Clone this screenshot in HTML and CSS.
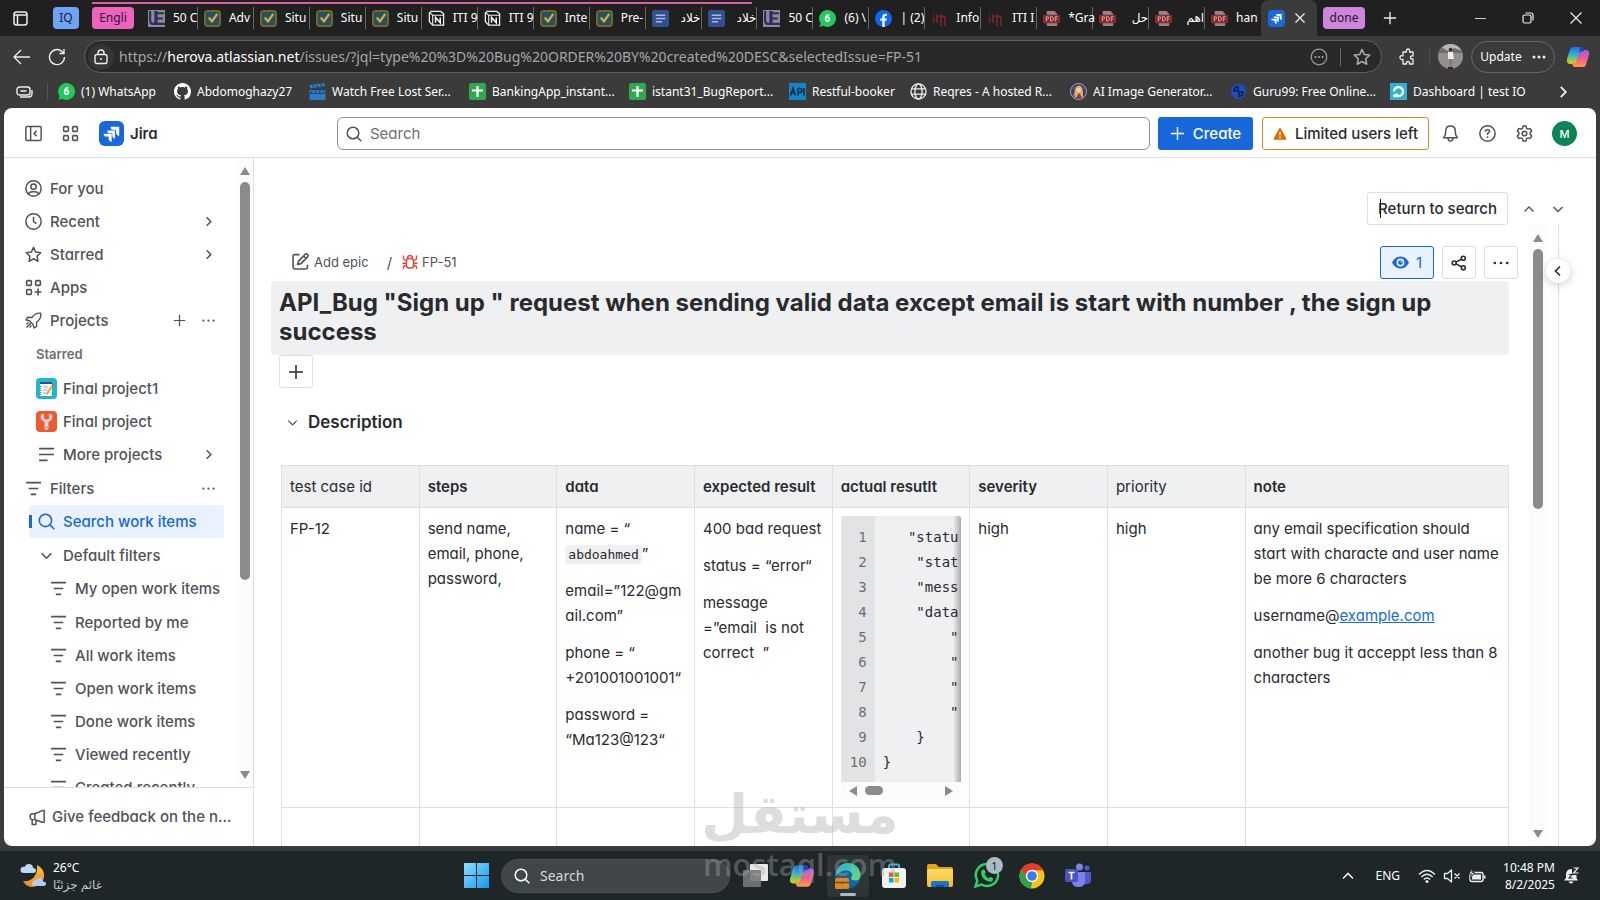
FILE: index.html
```html
<!DOCTYPE html>
<html lang="en">
<head>
<meta charset="utf-8">
<title>FP-51 - Jira</title>
<link rel="stylesheet" href="styles.css">
</head>
<body>
<svg class="defs" aria-hidden="true">
  <defs>
    <linearGradient id="gWin" x1="0" y1="0" x2="1" y2="1"><stop offset="0" stop-color="#8be0fb"/><stop offset="1" stop-color="#1596ee"/></linearGradient>
    <linearGradient id="gCoA" x1="0" y1="0" x2="0" y2="1"><stop offset="0" stop-color="#1a6ee8"/><stop offset=".45" stop-color="#2bb3d6"/><stop offset=".75" stop-color="#8ecb4a"/><stop offset="1" stop-color="#f5c518"/></linearGradient>
    <linearGradient id="gCoB" x1="0" y1="0" x2="0" y2="1"><stop offset="0" stop-color="#a35bea"/><stop offset=".5" stop-color="#ef5b93"/><stop offset="1" stop-color="#ff9a4a"/></linearGradient>
    <linearGradient id="gEdge" x1="0" y1="0" x2="1" y2="1"><stop offset="0" stop-color="#2aa8e0"/><stop offset=".6" stop-color="#3fd1a0"/><stop offset="1" stop-color="#6be06a"/></linearGradient>
    <linearGradient id="gMoon" x1="0" y1="0" x2="0" y2="1"><stop offset="0" stop-color="#f6c443"/><stop offset="1" stop-color="#ee8b25"/></linearGradient>
    <linearGradient id="gFold" x1="0" y1="0" x2="0" y2="1"><stop offset="0" stop-color="#ffdc6a"/><stop offset="1" stop-color="#f7b92b"/></linearGradient>
  </defs>
  <symbol id="ue" viewBox="0 0 16 16"><rect width="16" height="16" fill="#8b8b90"/><path d="M2 1v9q0 3 3 3h2V1M8 3h7M8 8h6M8 13h8M8 1v13" fill="none" stroke="#2c2a68" stroke-width="2"/></symbol>
  <symbol id="check" viewBox="0 0 18 18"><rect x="1" y="1" width="16" height="16" rx="3" fill="#24506e" stroke="#77681f" stroke-width="2"/><path d="M5 8l3.500 4L14 4" fill="none" stroke="#d3ad2f" stroke-width="2.400"/></symbol>
  <symbol id="notion" viewBox="0 0 18 18"><path d="M1.500 3l2-1.500h10l3 2.500v12H5L1.500 12.500z" fill="#161616" stroke="#eee" stroke-width="1.400"/><path d="M2 3l3 2.500h11.500M5 5.500V16" fill="none" stroke="#eee" stroke-width="1.200"/><path d="M8 13.500V8l5 5.500V8" fill="none" stroke="#fff" stroke-width="1.600"/></symbol>
  <symbol id="doc" viewBox="0 0 16 16"><rect width="16" height="16" rx="2" fill="#31508f"/><path d="M3.500 5h9M3.500 8h9M3.500 11h6" stroke="#a9b6d4" stroke-width="1.500"/></symbol>
  <symbol id="wa6" viewBox="0 0 18 18"><path d="M9 0a9 9 0 1 1-4.500 16.800L.500 18l1.200-4A9 9 0 0 1 9 0z" fill="#25c95b"/><path d="M11 5Q7 5 7 9.500a2 2.200 0 1 0 2-2q-1.500 0-2 2" fill="none" stroke="#fff" stroke-width="1.700"/></symbol>
  <symbol id="fb" viewBox="0 0 18 18"><circle cx="9" cy="9" r="9" fill="#1166ee"/><path d="M7.800 18v-6.500H5.600V9h2.200V7.200Q7.800 4 11 4h1.500v2.300h-1.200q-1.100 0-1.100 1.200V9h2.200l-.4 2.500h-1.800V18z" fill="#fff"/></symbol>
  <symbol id="iti" viewBox="0 0 14 16"><path d="M1.500 6v6M1.500 3v1.500M4.500 4v8M4.500 6h3M8.500 4v11M8.500 6h3.500v9" fill="none" stroke="#70262b" stroke-width="1.600"/></symbol>
  <symbol id="pdf" viewBox="0 0 18 18"><path d="M4 1h8l3 3v13H4z" fill="#8f8787"/><rect x="0" y="5" width="18" height="9" rx="1.500" fill="#8a2a2d"/><path d="M3.500 12V7h1.200q1.300 0 1.300 1.300T4.700 9.600H3.500M8 7h1q2 0 2 2.300T9 11.700H8zM13 12V7h2.500M13 9.400h2" fill="none" stroke="#d8b4b4" stroke-width=".9"/></symbol>
  <symbol id="jira" viewBox="0 0 26 26"><rect width="26" height="26" rx="6" fill="#1868db"/><path d="M12 6h9v9.500q-3.200-.600-3.200-3.500V9.300H15.500Q12 9.300 12 6z" fill="#fff"/><path d="M8.500 9.800h8.200v8.400q-3-.5-3-3.400v-2h-2q-3.200 0-3.200-3z" fill="#fff" opacity=".95"/><path d="M4.800 13.200h8.400v8.300q-3.200-.5-3.200-3.400v-1.900H8q-3.200 0-3.200-3z" fill="#fff"/></symbol>
  <symbol id="github" viewBox="0 0 16 16"><path fill="#fff" d="M8 0C3.580 0 0 3.580 0 8c0 3.540 2.290 6.530 5.470 7.590.4.070.55-.17.55-.38 0-.19-.01-.82-.01-1.490-2.010.37-2.530-.49-2.690-.94-.09-.23-.48-.94-.82-1.130-.28-.15-.68-.52-.01-.53.63-.01 1.080.58 1.230.82.72 1.210 1.870.87 2.330.66.07-.52.28-.87.51-1.070-1.780-.2-3.640-.89-3.640-3.950 0-.87.31-1.590.82-2.150-.08-.2-.36-1.020.08-2.120 0 0 .67-.21 2.200.82.640-.18 1.320-.27 2-.27s1.360.09 2 .27c1.530-1.040 2.200-.82 2.200-.82.44 1.100.16 1.920.08 2.120.51.56.82 1.270.82 2.150 0 3.070-1.870 3.750-3.650 3.950.29.25.54.73.54 1.480 0 1.070-.01 1.930-.01 2.200 0 .21.15.46.55.38A8.010 8.010 0 0 0 16 8c0-4.420-3.580-8-8-8z"/></symbol>
  <symbol id="film" viewBox="0 0 16 17"><path d="M0 7h16v10H0zM0 2l15-2 .5 3L.500 5.500z" fill="#2e7cc4"/><path d="M3 2l1.500 2.500M7 1.500L8.500 4M11 1l1.500 2.500M3 7L1.500 10M7 7L5.500 10M11 7L9.500 10M15 7l-1.500 3M0 10.500h16" stroke="#1d4a78" stroke-width="1.200"/></symbol>
  <symbol id="plusg" viewBox="0 0 17 17"><rect width="17" height="17" rx="2" fill="#2fa84f"/><path d="M8.500 3v11M3 7.500h11" stroke="#fff" stroke-width="2.200"/></symbol>
  <symbol id="api" viewBox="0 0 17 17"><rect width="17" height="17" fill="#1585c7"/><path d="M1.500 12.500L4 5l2.500 7.500M2.500 10h3M9 12.500V5.500h2q2 0 2 2t-2 2H9M15 5v7.500" fill="none" stroke="#0b2740" stroke-width="1.500"/></symbol>
  <symbol id="globe" viewBox="0 0 18 18"><g fill="none" stroke="#eee" stroke-width="1.400"><circle cx="9" cy="9" r="8"/><ellipse cx="9" cy="9" rx="3.800" ry="8"/><path d="M1.500 6.200h15M1.500 11.800h15"/></g></symbol>
  <symbol id="ai" viewBox="0 0 17 17"><circle cx="8.500" cy="8.500" r="8" fill="#35406e" stroke="#a8a8b8"/><path d="M4.500 14.500Q3.500 3.500 8.500 2.500T13 14.500z" fill="#e0b060"/><circle cx="8.800" cy="7" r="2.300" fill="#f2cfb4"/><path d="M6.500 16Q7 10.500 9 10.500t2.500 5.500z" fill="#8a3d5a"/><path d="M3 6l2-2M13 4l1.500 2M3 11l1 2" stroke="#d05060"/></symbol>
  <symbol id="guru" viewBox="0 0 17 17"><circle cx="8.500" cy="8.500" r="7.500" fill="#1c4fc4"/><path d="M8 3.500Q4 4 4 8h4zM9 13.500q4-.5 4-4.500H9z" fill="none" stroke="#10213f" stroke-width="1.600"/></symbol>
  <symbol id="tio" viewBox="0 0 17 17"><rect width="17" height="17" fill="#2fb0d8"/><path d="M3 13h5.500a4.500 4.500 0 1 0-4.500-4.500M3 13q3-.3 4-2.500" fill="none" stroke="#fff" stroke-width="2.300"/></symbol>
  <symbol id="copilot" viewBox="0 0 24 24"><path d="M7 2h8q2 0 2.500 2L18 6h-2.500q-1.500 0-2 1.600L10.600 17q-.6 2-2.600 2H4.500Q0 19 1 14L4 4.500Q4.600 2 7 2z" fill="url(#gCoA)"/><path d="M17 22H9q-2 0-2.500-2L6 18h2.500q1.500 0 2-1.600L13.400 7q.6-2 2.600-2h3.500q4.500 0 3.500 5l-3 9.500Q19.400 22 17 22z" fill="url(#gCoB)"/><path d="M15 2q2 0 2.500 2l.7 2.300H16q-2 0-2.800 2.700L14 2z" fill="#1848b8"/></symbol>

  <symbol id="i-chev-r" viewBox="0 0 16 16"><path d="M6 3.500L10.500 8 6 12.500" fill="none" stroke="currentColor" stroke-width="1.600"/></symbol>
  <symbol id="i-chev-l" viewBox="0 0 16 16"><path d="M10 3.500L5.500 8l4.500 4.500" fill="none" stroke="currentColor" stroke-width="1.600"/></symbol>
  <symbol id="i-chev-d" viewBox="0 0 16 16"><path d="M3.500 6L8 10.500 12.500 6" fill="none" stroke="currentColor" stroke-width="1.400"/></symbol>
  <symbol id="i-chev-u" viewBox="0 0 16 16"><path d="M3.500 10.500L8 6l4.500 4.500" fill="none" stroke="currentColor" stroke-width="1.400"/></symbol>
  <symbol id="i-plus" viewBox="0 0 16 16"><path d="M8 1v14M1 8h14" fill="none" stroke="currentColor" stroke-width="1.500"/></symbol>
  <symbol id="i-dots" viewBox="0 0 16 16"><g fill="currentColor"><circle cx="2.500" cy="8" r="1.200"/><circle cx="8" cy="8" r="1.200"/><circle cx="13.500" cy="8" r="1.200"/></g></symbol>
  <symbol id="i-search" viewBox="0 0 16 16"><g fill="none" stroke="currentColor" stroke-width="1.500"><circle cx="7" cy="7" r="5.800"/><path d="M11 11l4.300 4.300"/></g></symbol>
  <symbol id="i-filter" viewBox="0 0 16 16"><path d="M1 2.500h14M3.500 8h9M5.500 13.500h5" fill="none" stroke="currentColor" stroke-width="1.500"/></symbol>
  <symbol id="i-lines" viewBox="0 0 16 16"><path d="M1 2.500h14M1 8h14M1 13.500h8" fill="none" stroke="currentColor" stroke-width="1.500"/></symbol>
  <symbol id="i-panel" viewBox="0 0 16 16"><g fill="none" stroke="currentColor" stroke-width="1.400"><rect x=".8" y="1.500" width="14.400" height="13" rx="1"/><path d="M5.300 1.500v13M11 5.500L8.500 8l2.500 2.500"/></g></symbol>
  <symbol id="i-grid" viewBox="0 0 16 16"><g fill="none" stroke="currentColor" stroke-width="1.500"><rect x="1.500" y="1.500" width="4.500" height="4.500" rx="1"/><rect x="10" y="1.500" width="4.500" height="4.500" rx="1"/><rect x="1.500" y="10" width="4.500" height="4.500" rx="1"/><rect x="10" y="10" width="4.500" height="4.500" rx="1"/></g></symbol>
  <symbol id="i-apps" viewBox="0 0 16 16"><g fill="none" stroke="currentColor" stroke-width="1.500"><rect x="1.500" y="1.500" width="4.500" height="4.500" rx="1"/><rect x="10" y="1.500" width="4.500" height="4.500" rx="1"/><rect x="1.500" y="10" width="4.500" height="4.500" rx="1"/><path d="M12.300 9v6.500M9 12.300h6.500"/></g></symbol>
  <symbol id="i-user" viewBox="0 0 16 16"><g fill="none" stroke="currentColor" stroke-width="1.400"><circle cx="8" cy="8" r="7.200"/><circle cx="8" cy="6.300" r="2.500"/><path d="M3.500 13.300Q4 11 6.500 11h3q2.500 0 3 2.300"/></g></symbol>
  <symbol id="i-clock" viewBox="0 0 16 16"><g fill="none" stroke="currentColor" stroke-width="1.400"><circle cx="8" cy="8" r="7.200"/><path d="M8 3.500V8l2.800 2"/></g></symbol>
  <symbol id="i-star" viewBox="0 0 16 16"><path d="M8 1.300l2 4.400 4.800.6-3.500 3.300.9 4.800L8 12l-4.200 2.400.9-4.800L1.200 6.300 6 5.700z" fill="none" stroke="currentColor" stroke-width="1.400" stroke-linejoin="round"/></symbol>
  <symbol id="i-rocket" viewBox="0 0 16 16"><path d="M14.800 1.200Q9.500.5 6.500 5.200L2.500 5 1 7.500l3.500 1 3 3 1 3.500L11 13.500l-.2-4Q15.500 6.500 14.800 1.200zM5.500 10.500L1.500 14.500M3.500 10L1.300 11.500M6 12.500l-1.500 2.200" fill="none" stroke="currentColor" stroke-width="1.300" stroke-linejoin="round"/></symbol>
  <symbol id="i-mega" viewBox="0 0 16 16"><path d="M5.500 4.500L12.500 1.500h1.800v11h-1.800L5.500 10H3.500Q1 10 1 7.300T3.500 4.500zM5.500 4.500V10M3 10v4.500h3.500V11" fill="none" stroke="currentColor" stroke-width="1.400" stroke-linejoin="round"/></symbol>
  <symbol id="i-bell" viewBox="0 0 16 16"><path d="M8 1Q3.800 1 3.500 5.500L3.200 9 1.500 12h13L12.800 9l-.3-3.500Q12.200 1 8 1zM5.500 12.300q.5 2.700 2.500 2.700t2.500-2.700" fill="none" stroke="currentColor" stroke-width="1.400" stroke-linejoin="round"/></symbol>
  <symbol id="i-help" viewBox="0 0 16 16"><g fill="none" stroke="currentColor" stroke-width="1.400"><circle cx="8" cy="8" r="7.200"/><path d="M6 6.300Q6 4.500 8 4.500t2 1.700Q10 7.300 8 8v1.500"/></g><circle cx="8" cy="11.500" r=".9" fill="currentColor"/></symbol>
  <symbol id="i-gear" viewBox="0 0 16 16"><g fill="none" stroke="currentColor" stroke-width="1.400" stroke-linejoin="round"><path d="M6.600 1h2.800l.5 2.100 1.400.8 2.100-.6 1.400 2.400L13.300 7.200v1.600l1.500 1.500-1.400 2.400-2.100-.6-1.400.8L9.400 15H6.600l-.5-2.100-1.400-.8-2.100.6-1.400-2.400 1.500-1.500V7.200L1.200 5.700l1.400-2.400 2.100.6 1.400-.8z"/><circle cx="8" cy="8" r="2.200"/></g></symbol>
  <symbol id="i-warn" viewBox="0 0 16 16"><path d="M8 1.200q.8 0 1.200.8l6 11q.6 1.500-1 1.500H1.800q-1.600 0-1-1.500l6-11Q7.200 1.200 8 1.200z" fill="#e06c00"/><path d="M8 5.500v4" stroke="#fff" stroke-width="1.600"/><circle cx="8" cy="11.800" r="1" fill="#fff"/></symbol>
  <symbol id="i-edit" viewBox="0 0 16 16"><g fill="none" stroke="currentColor" stroke-width="1.500" stroke-linejoin="round"><path d="M7 1.500H2.500Q1 1.500 1 3v10.500Q1 15 2.500 15H13q1.500 0 1.500-1.500V11"/><path d="M12.500 1.200q1.400-.7 2.200.1t0 2.300L8.500 10l-3.200.8.9-3.200zM11 3l2.200 2.200"/></g></symbol>
  <symbol id="i-bug" viewBox="0 0 16 16"><g fill="none" stroke="#e2483d" stroke-width="1.400"><rect x="4.500" y="4.500" width="7" height="9.500" rx="2.500"/><path d="M5.500 4.500Q5.500 1.500 8 1.500t2.500 3M4.500 7L1.500 5V1.500M11.500 7l3-2V1.500M.500 9.200h4M11.500 9.200h4M4.500 11l-3 1.500V15M11.500 11l3 1.500V15"/></g></symbol>
  <symbol id="i-eye" viewBox="0 0 17 13"><path d="M8.500.5Q14 .5 17 6.500 14 12.500 8.500 12.500T0 6.500Q3 .5 8.500.5z" fill="#1868db"/><circle cx="8.500" cy="6.500" r="3.900" fill="#e9f2fe"/><circle cx="8.500" cy="6.500" r="2.300" fill="#1868db"/><circle cx="9.300" cy="5.700" r=".8" fill="#e9f2fe"/></symbol>
  <symbol id="i-share" viewBox="0 0 16 16"><g fill="none" stroke="currentColor" stroke-width="1.600"><circle cx="3.200" cy="8" r="2"/><circle cx="12.300" cy="3.300" r="2"/><circle cx="12.300" cy="12.700" r="2"/><path d="M5 7.100l5.500-2.900M5 8.900l5.500 2.900"/></g></symbol>
</svg>

<header class="chrome">
  <div class="tabstrip">
    <button class="tabmenu" aria-label="Tab actions"><svg width="15" height="15" viewBox="0 0 15 15"><g fill="none" stroke="#eee" stroke-width="1.500"><rect x="1" y="1" width="13" height="13" rx="2.500"/><path d="M1 4h13M4.500 4v10"/></g></svg></button>
    <button class="group blue">IQ</button>
    <button class="group pink">Engli</button>
    <div class="tabs">
      <span class="groupline"></span>
      <button class="tab"><svg class="fav"><use href="#ue"/></svg><span>50 C</span></button>
      <button class="tab"><svg class="fav"><use href="#check"/></svg><span>Adv</span></button>
      <button class="tab"><svg class="fav"><use href="#check"/></svg><span>Situ</span></button>
      <button class="tab"><svg class="fav"><use href="#check"/></svg><span>Situ</span></button>
      <button class="tab"><svg class="fav"><use href="#check"/></svg><span>Situ</span></button>
      <button class="tab"><svg class="fav"><use href="#notion"/></svg><span>ITI 9</span></button>
      <button class="tab"><svg class="fav"><use href="#notion"/></svg><span>ITI 9</span></button>
      <button class="tab"><svg class="fav"><use href="#check"/></svg><span>Inte</span></button>
      <button class="tab"><svg class="fav"><use href="#check"/></svg><span>Pre-</span></button>
      <button class="tab"><svg class="fav"><use href="#doc"/></svg><span dir="rtl">خلاد</span></button>
      <button class="tab"><svg class="fav"><use href="#doc"/></svg><span dir="rtl">خلاد</span></button>
      <button class="tab"><svg class="fav"><use href="#ue"/></svg><span>50 C</span></button>
      <button class="tab"><svg class="fav"><use href="#wa6"/></svg><span>(6) \</span></button>
      <button class="tab"><svg class="fav"><use href="#fb"/></svg><span dir="rtl">(2) |</span></button>
      <button class="tab"><svg class="fav"><use href="#iti"/></svg><span>Info</span></button>
      <button class="tab"><svg class="fav"><use href="#iti"/></svg><span>ITI I</span></button>
      <button class="tab"><svg class="fav"><use href="#pdf"/></svg><span>*Gra</span></button>
      <button class="tab"><svg class="fav"><use href="#pdf"/></svg><span dir="rtl">حل</span></button>
      <button class="tab"><svg class="fav"><use href="#pdf"/></svg><span dir="rtl">اهم</span></button>
      <button class="tab last"><svg class="fav"><use href="#pdf"/></svg><span>han</span></button>
    </div>
    <div class="tab-active"><svg class="fav"><use href="#jira"/></svg><button aria-label="Close tab"><svg width="10" height="10" viewBox="0 0 10 10"><path d="M.500.500l9 9M9.500.500l-9 9" stroke="#eee" stroke-width="1.300"/></svg></button></div>
    <button class="group violet">done</button>
    <button class="newtab" aria-label="New tab"><svg width="14" height="14" class="white"><use href="#i-plus"/></svg></button>
    <div class="wincontrols">
      <button aria-label="Minimize"><svg width="11" height="11"><path d="M0 5.500h11" stroke="#ccc" stroke-width="1"/></svg></button>
      <button aria-label="Restore"><svg width="12" height="12" viewBox="0 0 12 12"><g fill="none" stroke="#eee" stroke-width="1.200"><rect x="1" y="3" width="8" height="8" rx="1.500"/><path d="M3.500 1h5.500q2 0 2 2v5.500"/></g></svg></button>
      <button aria-label="Close"><svg width="12" height="12" viewBox="0 0 12 12"><path d="M.500.500l11 11M11.500.500l-11 11" stroke="#eee" stroke-width="1.200"/></svg></button>
    </div>
  </div>

  <div class="toolbar">
    <button class="nav" aria-label="Back"><svg width="17" height="16" viewBox="0 0 17 16"><path d="M8 1L1 8l7 7M1 8h16" fill="none" stroke="#eee" stroke-width="1.300"/></svg></button>
    <button class="nav" aria-label="Refresh"><svg width="18" height="18" viewBox="0 0 18 18"><path d="M16.500 9A7.500 7.500 0 1 1 14 3.500L16 5.500M16 1v4.500h-4.500" fill="none" stroke="#eee" stroke-width="1.400"/></svg></button>
    <div class="address">
      <span class="lock"><svg width="14" height="16" viewBox="0 0 14 16"><g fill="none" stroke="#eee" stroke-width="1.400"><rect x="1" y="5.500" width="12" height="9" rx="2"/><path d="M4 5.500V4q0-3 3-3t3 3v1.500"/></g><circle cx="7" cy="10" r="1" fill="#eee"/></svg></span>
      <a class="url" href="#">https://<b>herova.atlassian.net</b>/issues/?jql=type%20%3D%20Bug%20ORDER%20BY%20created%20DESC&amp;selectedIssue=FP-51</a>
      <svg width="18" height="18" viewBox="0 0 18 18"><circle cx="9" cy="9" r="7.800" fill="none" stroke="#999" stroke-width="1.200"/><g fill="#aaa"><circle cx="5.500" cy="9" r="1"/><circle cx="9" cy="9" r="1"/><circle cx="12.500" cy="9" r="1"/></g></svg>
      <i class="vsep"></i>
      <svg width="18" height="18" class="grey"><use href="#i-star"/></svg>
    </div>
    <svg class="puzzle" width="18" height="18" viewBox="0 0 18 18"><path d="M5 4h2.500Q7 1 9 1t1.500 3H14v4q-2.500-.5-2.500 1.500T14 11v5h-3.500Q11 13.500 9 13.500T7.500 16H4v-4.500Q1 12 1 9.500T4 8V4z" fill="none" stroke="#eee" stroke-width="1.300" stroke-linejoin="round"/></svg>
    <i class="tsep"></i>
    <svg class="profile" width="25" height="25" viewBox="0 0 25 25"><clipPath id="cp"><circle cx="12.500" cy="12.500" r="12.500"/></clipPath><g clip-path="url(#cp)"><rect width="25" height="25" fill="#8f8f94"/><rect width="25" height="7" fill="#b9b7b0"/><path d="M0 6l5-2 5 3 6-3 9 3v2H0z" fill="#6f6f66"/><circle cx="12.500" cy="5.500" r="1.800" fill="#3f2e28"/><path d="M10 8h5l1 7h-6z" fill="#ecebec"/><path d="M11 15h3v6l-1 3h-1.500z" fill="#a9705a"/><path d="M10 23h5v2h-5z" fill="#2d2424"/></g></svg>
    <button class="update">Update <svg width="14" height="14" viewBox="0 0 14 14"><g fill="#eee"><circle cx="2" cy="7" r="1.500"/><circle cx="7" cy="7" r="1.500"/><circle cx="12" cy="7" r="1.500"/></g></svg></button>
    <svg class="cop" width="24" height="24"><use href="#copilot"/></svg>
  </div>

  <nav class="bookmarks">
    <svg width="17" height="12" viewBox="0 0 17 12"><g fill="none" stroke="#eee" stroke-width="1.400"><rect x="1" y="1" width="13" height="8" rx="2.500"/><path d="M4.500 5h6M4 11h8.500q3.500 0 3.500-3.500V4"/></g></svg>
    <i class="bsep"></i>
    <a href="#" class="w-a"><svg><use href="#wa6"/></svg><span>(1) WhatsApp</span></a>
    <a href="#" class="w-b"><svg><use href="#github"/></svg><span>Abdomoghazy27</span></a>
    <a href="#"><svg><use href="#film"/></svg><span>Watch Free Lost Ser...</span></a>
    <a href="#"><svg><use href="#plusg"/></svg><span>BankingApp_instant...</span></a>
    <a href="#"><svg><use href="#plusg"/></svg><span>istant31_BugReport...</span></a>
    <a href="#" class="w-c"><svg><use href="#api"/></svg><span>Restful-booker</span></a>
    <a href="#"><svg><use href="#globe"/></svg><span>Reqres - A hosted R...</span></a>
    <a href="#"><svg><use href="#ai"/></svg><span>AI Image Generator...</span></a>
    <a href="#"><svg><use href="#guru"/></svg><span>Guru99: Free Online...</span></a>
    <a href="#"><svg><use href="#tio"/></svg><span>Dashboard | test IO</span></a>
    <button class="more" aria-label="More favorites"><svg width="18" height="18" class="white"><use href="#i-chev-r"/></svg></button>
  </nav>
</header>

<div class="page">
  <header class="jhead">
    <div class="brand">
      <button class="ib" aria-label="Collapse sidebar"><svg width="17" height="17"><use href="#i-panel"/></svg></button>
      <button class="ib" aria-label="Switch sites"><svg width="17" height="17"><use href="#i-grid"/></svg></button>
      <a href="#" class="logo"><svg width="25" height="25"><use href="#jira"/></svg>Jira</a>
    </div>
    <label class="search"><svg width="16" height="16"><use href="#i-search"/></svg><input type="text" placeholder="Search" aria-label="Search"></label>
    <button class="create"><svg width="15" height="15"><use href="#i-plus"/></svg>Create</button>
    <button class="limited"><svg width="14" height="14"><use href="#i-warn"/></svg>Limited users left</button>
    <div class="headicons">
      <button class="ib" aria-label="Notifications"><svg width="17" height="17"><use href="#i-bell"/></svg></button>
      <button class="ib" aria-label="Help"><svg width="17" height="17"><use href="#i-help"/></svg></button>
      <button class="ib" aria-label="Settings"><svg width="17" height="17"><use href="#i-gear"/></svg></button>
    </div>
    <button class="me" aria-label="Account">M</button>
  </header>

  <div class="body">
    <aside class="side">
      <div class="side-scroll">
        <nav class="side-nav">
          <a href="#" class="row"><svg><use href="#i-user"/></svg><span>For you</span></a>
          <a href="#" class="row"><svg><use href="#i-clock"/></svg><span>Recent</span><svg class="end"><use href="#i-chev-r"/></svg></a>
          <a href="#" class="row"><svg><use href="#i-star"/></svg><span>Starred</span><svg class="end"><use href="#i-chev-r"/></svg></a>
          <a href="#" class="row"><svg><use href="#i-apps"/></svg><span>Apps</span></a>
          <a href="#" class="row"><svg><use href="#i-rocket"/></svg><span>Projects</span><svg class="mid"><use href="#i-plus"/></svg><svg class="end"><use href="#i-dots"/></svg></a>
          <h2 class="sub">Starred</h2>
          <a href="#" class="row l2 step"><svg class="proj" viewBox="0 0 21 21"><rect width="21" height="21" rx="4" fill="#1fb6d6"/><rect x="4" y="4" width="12" height="14" fill="#f4f8fa"/><path d="M4 4h12v2H4z" fill="#35506a"/><path d="M4.500 8v10" stroke="#48a" stroke-width="1.500" stroke-dasharray="1 1"/><path d="M7 9h5M7 12h4M7 15h3" stroke="#aab"/><path d="M16.500 6l1.500 1-6 9-2 1 .5-2.500z" fill="#f2a52b"/><path d="M16.500 6l1.500 1-1 1.500-1.500-1z" fill="#d8433b"/></svg><span>Final project1</span></a>
          <a href="#" class="row l2"><svg class="proj" viewBox="0 0 21 21"><rect width="21" height="21" rx="4" fill="#f15a31"/><path d="M5 3.500Q3.500 9 8.500 11v6q0 2 2 2t2-2v-6Q17.500 9 16 3.500L13 3v4.500l-2.500 1.200L8 7.500V3z" fill="#cfd3d8"/><circle cx="10.500" cy="16.500" r="1" fill="#8a9098"/></svg><span>Final project</span></a>
          <a href="#" class="row l2"><svg><use href="#i-lines"/></svg><span>More projects</span><svg class="end"><use href="#i-chev-r"/></svg></a>
          <a href="#" class="row step"><svg><use href="#i-filter"/></svg><span>Filters</span><svg class="end"><use href="#i-dots"/></svg></a>
          <a href="#" class="row l2 on"><svg><use href="#i-search"/></svg><span>Search work items</span></a>
          <a href="#" class="row l2 step"><svg><use href="#i-chev-d"/></svg><span>Default filters</span></a>
          <a href="#" class="row l3"><svg><use href="#i-filter"/></svg><span>My open work items</span></a>
          <a href="#" class="row l3 step"><svg><use href="#i-filter"/></svg><span>Reported by me</span></a>
          <a href="#" class="row l3"><svg><use href="#i-filter"/></svg><span>All work items</span></a>
          <a href="#" class="row l3"><svg><use href="#i-filter"/></svg><span>Open work items</span></a>
          <a href="#" class="row l3"><svg><use href="#i-filter"/></svg><span>Done work items</span></a>
          <a href="#" class="row l3"><svg><use href="#i-filter"/></svg><span>Viewed recently</span></a>
          <a href="#" class="row l3"><svg><use href="#i-filter"/></svg><span>Created recently</span></a>
        </nav>
        <div class="vbar" aria-hidden="true"><i class="up"></i><i class="thumb side-thumb"></i><i class="down"></i></div>
      </div>
      <a href="#" class="feedback"><svg width="17" height="17"><use href="#i-mega"/></svg>Give feedback on the n...</a>
    </aside>

    <main class="main">
      <div class="topline">
        <button class="return"><i class="caret"></i>Return to search</button>
        <button class="ib" aria-label="Previous"><svg width="16" height="16"><use href="#i-chev-u"/></svg></button>
        <button class="ib" aria-label="Next"><svg width="16" height="16"><use href="#i-chev-d"/></svg></button>
      </div>
      <div class="panes">
        <section class="issue">
          <div class="crumbs">
            <a href="#" class="epic"><svg width="17" height="17"><use href="#i-edit"/></svg>Add epic</a>
            <span class="slash">/</span>
            <a href="#" class="key"><svg width="16" height="16"><use href="#i-bug"/></svg>FP-51</a>
            <div class="acts">
              <button class="watch"><svg width="17" height="13"><use href="#i-eye"/></svg>1</button>
              <button class="sq" aria-label="Share"><svg width="16" height="16"><use href="#i-share"/></svg></button>
              <button class="sq" aria-label="Actions"><svg width="18" height="18"><use href="#i-dots"/></svg></button>
            </div>
          </div>
          <h1>API_Bug "Sign up " request when sending valid data except email is start with number , the sign up success</h1>
          <button class="sq add" aria-label="Add"><svg width="16" height="16"><use href="#i-plus"/></svg></button>
          <h2 class="desc"><svg width="15" height="15"><use href="#i-chev-d"/></svg>Description</h2>
          <table>
            <colgroup><col span="7" class="c"><col></colgroup>
            <thead><tr><th class="n">test case id</th><th>steps</th><th>data</th><th>expected result</th><th>actual resutlt</th><th>severity</th><th class="n">priority</th><th>note</th></tr></thead>
            <tbody>
              <tr>
                <td><p>FP-12</p></td>
                <td><p>send name, email, phone, password,</p></td>
                <td><p>name = “ <code>abdoahmed</code>”</p><p>email=”122@gmail.com”</p><p>phone = “ +201001001001“</p><p>password = “Ma123@123“</p></td>
                <td><p>400 bad request</p><p>status = “error“</p><p>message =”email&nbsp; is not correct&nbsp; ”</p></td>
                <td>
                  <div class="code"><pre class="nums">1
2
3
4
5
6
7
8
9
10</pre><pre class="src">   "statu
    "stat
    "mess
    "data
        "
        "
        "
        "
    }
}</pre></div>
                  <div class="hbar" aria-hidden="true"><i class="lf"></i><i class="hthumb"></i><i class="rt"></i></div>
                </td>
                <td><p>high</p></td>
                <td><p>high</p></td>
                <td><p>any email specification should start with characte and user name be more 6 characters</p><p>username@<a href="#">example.com</a></p><p>another bug it acceppt less than 8 characters</p></td>
              </tr>
              <tr class="empty"><td></td><td></td><td></td><td></td><td></td><td></td><td></td><td></td></tr>
            </tbody>
          </table>
        </section>
        <div class="vbar main-bar" aria-hidden="true"><i class="up"></i><i class="thumb main-thumb"></i><i class="down"></i></div>
        <div class="edge"><button aria-label="Expand panel"><svg width="16" height="16"><use href="#i-chev-l"/></svg></button></div>
      </div>
    </main>
  </div>
</div>

<footer class="taskbar">
  <div class="weather">
    <svg width="27" height="26" viewBox="0 0 27 26"><path d="M17 2q8 4 7 12T13 24Q6 24 3 18q7 1 11-4t3-12z" fill="url(#gMoon)"/><path d="M4 10q-4 0-3.500-3.500T4.500 4Q6 .5 9.500 1T13 5q3 0 3 2.500T13 10z" fill="#c2d6f7"/><path d="M15 23q-3.500 0-3-3t3.500-2.500Q17 14.500 20 15t3 3.500q3 0 3 2.300T23 23z" fill="#b0ccf5"/></svg>
    <div><div>26°C</div><div class="ar" dir="rtl">غائم جزئيًا</div></div>
  </div>
  <div class="apps">
    <button aria-label="Start"><svg width="25" height="25" viewBox="0 0 25 25"><path d="M0 0h12v12H0zM13 0h12v12H13zM0 13h12v12H0zM13 13h12v12H13z" fill="url(#gWin)"/></svg></button>
    <label class="tsearch"><svg width="16" height="16"><use href="#i-search"/></svg><input type="text" placeholder="Search" aria-label="Search Windows"></label>
    <button aria-label="Task view"><svg width="26" height="24" viewBox="0 0 26 24"><rect x="7" y="0" width="18" height="17" rx="1" fill="#e8e8e8"/><rect x="0" y="6" width="18" height="17" rx="1" fill="#777" opacity=".9"/></svg></button>
    <button aria-label="Copilot"><svg width="26" height="26"><use href="#copilot"/></svg></button>
    <button class="cur" aria-label="Edge"><svg width="28" height="28" viewBox="0 0 28 28"><circle cx="14" cy="14" r="12.500" fill="#1462ac"/><path d="M1.500 14A12.500 12.500 0 0 1 26.500 13q0 5.500-5.500 5.500-4 0-4-2.500 1.500-1.500 1-4-1-3.500-6-3.500-6 0-10.500 5.500z" fill="url(#gEdge)"/><rect x="1" y="16" width="14" height="11" rx="1.500" fill="#d98a24"/><path d="M5.500 16v-2h5v2M1 20.500h14M8 19.500v2.500" fill="none" stroke="#7d4a10" stroke-width="1.300"/></svg></button>
    <button aria-label="Store"><svg width="26" height="26" viewBox="0 0 26 26"><path d="M8 6V3q0-1.500 1.500-1.500h7Q18 1.500 18 3v3" fill="none" stroke="#35b3ee" stroke-width="2"/><rect x="1" y="5" width="24" height="20" rx="3" fill="#f1f2f3"/><path d="M8 9.500h4.500V14H8z" fill="#f25022"/><path d="M13.500 9.500H18V14h-4.500z" fill="#7fba00"/><path d="M8 15h4.500v4.500H8z" fill="#00a4ef"/><path d="M13.500 15H18v4.500h-4.500z" fill="#ffb900"/></svg></button>
    <button aria-label="File Explorer"><svg width="26" height="24" viewBox="0 0 26 24"><path d="M0 2q0-2 2-2h7l3 3h12q2 0 2 2v7H0z" fill="#e3a21a"/><rect y="5" width="26" height="18" rx="2" fill="url(#gFold)"/><path d="M4 23v-4q0-2 2-2h14q2 0 2 2v4z" fill="#1b74c8"/><path d="M9 23v-2h8v2z" fill="#0c4f94"/></svg></button>
    <button class="wa" aria-label="WhatsApp"><svg width="27" height="27" viewBox="0 0 27 27"><path d="M14 2a11 11 0 1 1-5.500 20.500L2.500 24.500 4.300 18.500A11 11 0 0 1 14 2z" fill="none" stroke="#2bd366" stroke-width="2.400"/><path d="M10 7.500q1.500-.5 2 1l.8 2-1.300 1.700q1.500 3 4.300 4.200l1.500-1.600 2.700 1.400q.5 2.800-2.500 3.500-2 .4-5.500-2T8.200 11.500q-.4-3 1.800-4z" fill="#2bd366"/></svg><span class="badge">1</span></button>
    <button aria-label="Chrome"><svg width="26" height="26" viewBox="0 0 26 26"><circle cx="13" cy="13" r="12.500" fill="#fbc116"/><path d="M2.200 6.700A12.500 12.500 0 0 1 24 7.200H13L7.600 16z" fill="#e33b2e"/><path d="M2.200 6.700L8 16.200q2 3 5.500 3l-2 6.200A12.500 12.500 0 0 1 2.200 6.700z" fill="#2ba24c"/><circle cx="13" cy="13" r="6.200" fill="#fff"/><circle cx="13" cy="13" r="4.800" fill="#3b7ded"/></svg></button>
    <button aria-label="Teams"><svg width="26" height="25" viewBox="0 0 26 25"><circle cx="14.500" cy="4" r="3.500" fill="#7b83eb"/><circle cx="22" cy="5" r="2.500" fill="#5059c9"/><path d="M17 9h8q1 0 1 1v7q0 4-4 4h-3z" fill="#5059c9"/><path d="M7 9h13v9q0 6-6.500 6T7 18z" fill="#7b83eb"/><rect y="6" width="13" height="13" rx="1.500" fill="#4b53bc"/><path d="M3.500 9.500h6M6.500 9.500v7" stroke="#fff" stroke-width="1.700"/></svg></button>
  </div>
  <div class="tray">
    <svg width="16" height="16" viewBox="0 0 16 16"><path d="M3 10.500L8 5.500l5 5" fill="none" stroke="#eee" stroke-width="1.600"/></svg>
    <span class="lang">ENG</span>
    <div class="sys">
      <svg width="18" height="16" viewBox="0 0 18 16"><g fill="none" stroke="#eee" stroke-width="1.300"><path d="M1 6.500Q9-1.500 17 6.500M3.300 9Q9 3.500 14.700 9M5.800 11.500Q9 8.500 12.200 11.500"/></g><circle cx="9" cy="13.500" r="1.500" fill="#eee"/></svg>
      <svg width="18" height="16" viewBox="0 0 18 16"><path d="M1.500 5.500h3L8.500 2v12l-4-3.500h-3zM11.500 5.500l5 5M16.500 5.500l-5 5" fill="none" stroke="#eee" stroke-width="1.300" stroke-linejoin="round"/></svg>
      <svg width="18" height="16" viewBox="0 0 18 16"><rect x="2" y="4.500" width="13" height="9" rx="2" fill="none" stroke="#eee" stroke-width="1.400"/><rect x="4" y="6.500" width="9" height="5" fill="#eee"/><path d="M16.500 7.500v3" stroke="#eee" stroke-width="2"/><path d="M4.500 0L1 6h2.500L2.500 10.500 6.500 4.500H4z" fill="#eee" stroke="#1f2628" stroke-width=".8"/></svg>
    </div>
    <div class="clock"><div>10:48 PM</div><div>8/2/2025</div></div>
    <svg width="16" height="18" viewBox="0 0 16 18"><path d="M7 2Q2 2.500 2 7.500V11L0 13.500h14L12.500 11V8H8V2.200zM4.500 14.500h5q-.5 2-2.500 2t-2.500-2z" fill="#eee"/><path d="M9.500 1h4.500L9.500 6h5" fill="none" stroke="#eee" stroke-width="1.200"/><path d="M5 7.500h3l-3 3.500h3.500" fill="none" stroke="#1f2628" stroke-width="1.100"/></svg>
  </div>
</footer>

<div class="watermark" aria-hidden="true"><div class="wm-ar" dir="rtl">مستقل</div><div class="wm-en">mostaql.com</div></div>
</body>
</html>
```
FILE: styles.css
```css
* { box-sizing: border-box; }
html, body { height: 100%; }
body { margin: 0; display: flex; flex-direction: column; overflow: hidden; background: #3b3b3b; color: #292a2e; font: 500 15px/20px Inter, "Liberation Sans", sans-serif; font-feature-settings: "cv11"; }
button { font: inherit; color: inherit; border: 0; background: none; padding: 0; margin: 0; display: flex; align-items: center; justify-content: center; font-feature-settings: inherit; }
input { font: inherit; border: 0; outline: 0; background: none; min-width: 0; flex: 1; padding: 0; font-feature-settings: inherit; }
a { color: inherit; text-decoration: none; }
h1, h2, p, pre { margin: 0; }
svg { flex: none; display: block; }
.defs { position: absolute; width: 0; height: 0; }
.white { color: #eee; }
.grey { color: #aaa; }

/* browser window */
.chrome, .taskbar { font: 13px/18px "Noto Sans", "DejaVu Sans", sans-serif; color: #fff; font-feature-settings: normal; flex: none; }
.tabstrip { height: 36px; background: #202020; display: flex; align-items: center; padding-left: 13px; font-size: 12px; }
.tabstrip > * { flex: none; }
.tabmenu { width: 15px; margin-right: 25px; }
.group { height: 22px; border-radius: 4px; color: #1c1c2c; }
.blue { width: 26px; background: #6ea3f8; margin-right: 13px; }
.pink { width: 42px; background: #ef62bd; }
.violet { width: 42px; background: #cf85dc; margin-left: 6px; }
.tabstrip .tabs { flex: 1 1 0; min-width: 0; display: flex; position: relative; height: 36px; align-items: center; padding-left: 8px; }
.groupline { position: absolute; left: -42px; top: 2px; width: 660px; height: 2px; background: #d8619f; }
.tab { flex: 1 1 0; min-width: 0; height: 22px; padding-left: 6px; border-right: 1px solid #666; justify-content: flex-start; gap: 8px; }
.tab.last { border-color: transparent; }
.fav { width: 17px; height: 17px; }
.tab span { flex: 1; min-width: 0; white-space: nowrap; text-align: start; }
.tab-active { width: 56px; height: 36px; background: #3b3b3b; border-radius: 8px 8px 0 0; display: flex; align-items: center; justify-content: space-between; padding: 0 12px 0 7px; }
.newtab { margin: 0 59px 0 18px; }
.wincontrols { display: flex; }
.wincontrols button { width: 48px; }

.toolbar { height: 41px; display: flex; align-items: center; padding: 0 10px 0 12px; }
.nav { width: 18px; margin-right: 18px; }
.address { flex: 1; height: 33px; border: 1px solid #606060; border-radius: 17px; background: #292929; display: flex; align-items: center; padding: 0 10px 0 3px; }
.lock { width: 26px; height: 26px; border-radius: 50%; background: #363636; display: flex; align-items: center; justify-content: center; margin-right: 5px; }
.url { flex: 1; font-size: 14px; color: #a6a6a6; white-space: nowrap; overflow: hidden; }
.url b { font-weight: 400; color: #fff; }
.vsep { width: 1px; height: 18px; background: #666; margin: 0 12px; }
.puzzle { margin-left: 17px; }
.tsep { width: 1px; height: 17px; background: #505050; margin: 0 8px 0 12px; }
.update { height: 32px; width: 84px; border: 1px solid #666; border-radius: 16px; margin: 0 11px 0 8px; gap: 10px; font-size: 12px; }
.bookmarks { height: 31px; display: flex; align-items: center; padding: 0 0 2px 16px; font-size: 12px; }
.bsep { width: 1px; height: 17px; background: #555; margin: 0 10px 0 14px; }
.bookmarks a { width: 160px; display: flex; align-items: center; gap: 6px; white-space: nowrap; }
.bookmarks a svg { width: 17px; height: 17px; }
.bookmarks .w-a { width: 116px; }
.bookmarks .w-b { width: 135px; }
.bookmarks .w-c { width: 121px; }
.more { margin-left: 4px; }

/* jira shell */
.page { flex: 1; min-height: 0; margin: 0 4px 5px; background: #fff; border-radius: 8px; overflow: hidden; display: flex; flex-direction: column; }
.jhead { height: 50px; flex: none; border-bottom: 1px solid #dddee1; display: flex; align-items: center; color: #505258; padding: 2px 19px 0 21px; }
.brand { width: 312px; display: flex; align-items: center; gap: 20px; }
.logo { display: flex; align-items: center; gap: 6px; color: #292a2e; font-weight: 600; }
.search { flex: 1; height: 33px; border: 1px solid #8c8f97; border-radius: 6px; display: flex; align-items: center; gap: 8px; padding: 0 8px; }
.search input { font-weight: 400; }
.search input::placeholder { color: #6b6e76; opacity: 1; }
.create { width: 95px; height: 33px; border-radius: 3px; background: #1868db; color: #fff; gap: 8px; margin: 0 9px 0 8px; }
.limited { width: 167px; height: 33px; border: 1px solid #e0842e; border-radius: 3px; color: #292a2e; gap: 8px; margin-right: 13px; }
.headicons { display: flex; gap: 20px; margin-right: 19px; }
.me { width: 25px; height: 25px; border-radius: 50%; background: #0b8457; color: #fff; font-size: 11px; }
.body { flex: 1; min-height: 0; display: flex; }

/* sidebar */
.side { width: 250px; flex: none; border-right: 1px solid #dddee1; display: flex; flex-direction: column; color: #505258; }
.side-scroll { flex: 1; min-height: 0; overflow: hidden; display: flex; }
.side-nav { flex: 1; min-width: 0; padding: 14px 12px 0 12px; }
.row { height: 33px; display: flex; align-items: center; gap: 8px; padding: 0 8px 0 9px; border-radius: 3px; white-space: nowrap; }
.row svg { width: 17px; height: 17px; }
.row span { flex: 1; }
.row .end { width: 15px; height: 15px; }
.row .mid { width: 13px; height: 13px; margin-right: 7px; }
.row .proj { width: 21px; height: 21px; margin: 0 -2px 0 -2px; }
.l2 { margin-left: 13px; }
.l3 { padding: 0 0 0 34px; }
.step { margin-top: 1px; }
.on { background: #e9f2fe; color: #1868db; position: relative; }
.on::before { content: ""; position: absolute; left: 0; top: 10px; width: 3px; height: 13px; background: #1868db; }
.sub { height: 34px; padding-left: 20px; font: 600 13px/34px Inter, sans-serif; color: #6b6e76; }
.feedback { height: 59px; border-top: 1px solid #dddee1; display: flex; align-items: center; gap: 6px; padding-left: 25px; white-space: nowrap; }

/* scrollbars */
.vbar { width: 17px; flex: none; background: #fcfcfc; display: flex; flex-direction: column; align-items: center; padding: 9px 0 8px; }
.vbar i, .hbar i { display: block; }
.up { border: 5px solid transparent; border-top: 0; border-bottom: 8px solid #8b8b8b; }
.down { border: 5px solid transparent; border-bottom: 0; border-top: 8px solid #8b8b8b; margin-top: auto; }
.thumb { width: 10px; border-radius: 5px; background: #8b8b8b; margin-top: 7px; }
.side-thumb { height: 65%; }
.main-thumb { height: 43%; }

/* issue */
.main { flex: 1; min-width: 0; display: flex; flex-direction: column; }
.topline { display: flex; justify-content: flex-end; align-items: center; gap: 13px; padding: 34px 30px 0 0; color: #505258; flex: none; }
.return { width: 141px; height: 33px; border: 1px solid #dddee1; border-radius: 3px; color: #292a2e; position: relative; }
.caret { position: absolute; left: 12px; top: 6px; width: 1px; height: 19px; background: #111; }
.panes { flex: 1; min-height: 0; display: flex; }
.issue { flex: 1; min-width: 0; overflow: hidden; padding: 21px 20px 0 17px; }
.crumbs { display: flex; align-items: center; height: 33px; color: #505258; font-size: 13px; font-weight: 400; padding-left: 21px; margin-right: -9px; }
.epic, .key { display: flex; align-items: center; gap: 5px; padding-bottom: 2px; }
.key { gap: 4px; }
.slash { margin: 0 10px 0 18px; font-size: 15px; }
.acts { margin-left: auto; display: flex; gap: 8px; font-size: 15px; }
.watch { width: 54px; height: 33px; border: 1px solid #1868db; border-radius: 3px; background: #e9f2fe; color: #1868db; gap: 7px; font-weight: 400; }
.sq { width: 34px; height: 33px; border: 1px solid #dddee1; border-radius: 3px; color: #292a2e; }
h1 { margin-top: 2px; padding: 7px 8px 9px; background: #eff0f2; border-radius: 3px; font-size: 24px; line-height: 29px; font-weight: 700; font-feature-settings: normal; }
.add { margin-left: 8px; }
.desc { display: flex; align-items: center; gap: 8px; padding-left: 14px; margin: 24px 0 32px; font-size: 17px; line-height: 21px; font-weight: 600; font-feature-settings: normal; }
.desc svg { color: #505258; }
table { width: calc(100% - 10px); margin-left: 10px; border-collapse: collapse; table-layout: fixed; font-weight: 400; line-height: 25px; }
.c { width: 11.22%; }
th, td { border: 1px solid #dddee1; text-align: left; vertical-align: top; padding: 8px; }
th { background: #eff0f2; font-weight: 600; white-space: nowrap; }
th.n { font-weight: 400; }
td p + p { margin-top: 12px; }
td p { overflow-wrap: anywhere; }
td a { color: #1868db; text-decoration: underline; }
td code { background: #eff0f2; border-radius: 3px; padding: 2px 3px; font: 13px/17px "DejaVu Sans Mono", monospace; }
.code { display: flex; overflow: hidden; border-radius: 3px 3px 0 0; background: linear-gradient(90deg, transparent, #aaa) right / 8px 100% no-repeat #eff0f2; }
.code pre { font: 14px/25px "DejaVu Sans Mono", monospace; padding: 9px 0 7px 8px; }
.code .nums { width: 34px; flex: none; background: #e1e3e5; color: #6b6e76; text-align: right; padding: 9px 8px 7px 0; }
.hbar { height: 17px; background: #fcfcfc; display: flex; align-items: center; padding: 0 8px; }
.lf { border: 5px solid transparent; border-left: 0; border-right: 8px solid #8b8b8b; }
.rt { border: 5px solid transparent; border-right: 0; border-left: 8px solid #8b8b8b; margin-left: auto; }
.hthumb { width: 18px; height: 9px; border-radius: 5px; background: #8b8b8b; margin-left: 8px; }
.empty td { height: 120px; }
.edge { width: 38px; flex: none; margin-left: 12px; border-left: 1px solid #dddee1; position: relative; }
.edge button { position: absolute; left: -13px; top: 34px; width: 24px; height: 24px; border-radius: 50%; background: #fff; box-shadow: 0 2px 8px #0003; }

/* taskbar */
.taskbar { height: 49px; background: #1f2628; display: flex; align-items: center; padding: 0 20px; font-size: 12px; line-height: 17px; }
.weather { flex: 1; display: flex; align-items: center; gap: 6px; }
.ar { color: #c4c8ca; }
.apps { display: flex; align-items: center; height: 49px; margin-right: 42px; }
.apps button { width: 42px; height: 42px; margin-right: 4px; border-radius: 4px; position: relative; }
.tsearch { width: 229px; height: 34px; border-radius: 17px; background: #404648; border: 1px solid #4a5052; display: flex; align-items: center; gap: 10px; padding: 0 12px; margin-right: 5px; font-size: 14px; }
.tsearch input::placeholder { color: #d8dadb; opacity: 1; }
.apps .cur { background: #2e3537; }
.cur::after { content: ""; position: absolute; bottom: 1px; width: 16px; height: 3px; border-radius: 2px; background: #a9bcc6; }
.badge { position: absolute; right: 4px; top: 2px; width: 17px; height: 17px; border-radius: 50%; background: #a9bcc6; color: #1c1c1c; font-size: 11px; line-height: 17px; }
.tray { flex: 1; display: flex; align-items: center; justify-content: flex-end; }
.lang { margin: 0 18px 0 20px; }
.sys { display: flex; gap: 7px; }
.clock { text-align: right; margin: 0 9px 0 17px; }

.watermark { position: absolute; left: 50%; bottom: 20px; width: 220px; margin-left: -110px; text-align: center; color: #a8a8a8; opacity: .38; pointer-events: none; white-space: nowrap; }
.wm-ar { font: 700 54px/66px "DejaVu Sans", sans-serif; }
.wm-en { font: 600 31px/32px "Open Sans", sans-serif; }
```
